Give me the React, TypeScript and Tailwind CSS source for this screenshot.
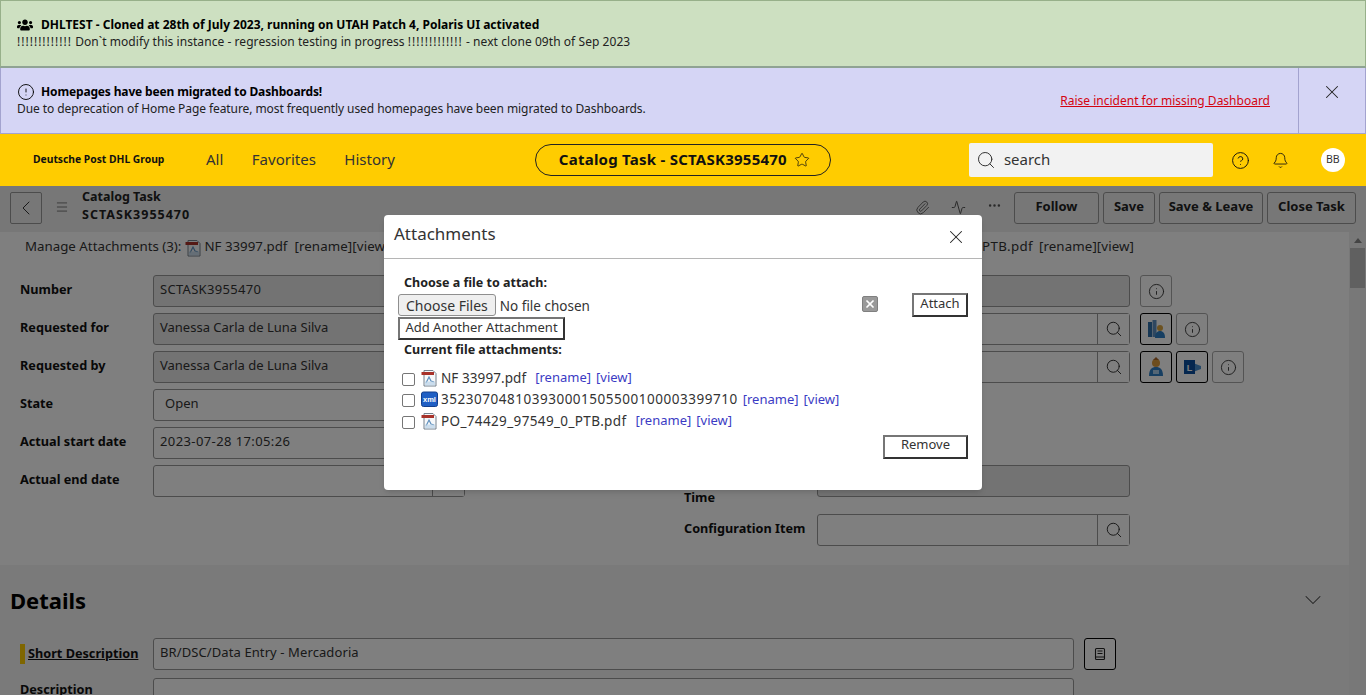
import type { ReactNode } from 'react';
import { Search, CircleHelp, Bell, Star, X, ChevronLeft, Menu, Paperclip, Activity, Ellipsis, Info, ChevronDown, CircleAlert } from 'lucide-react';
import { FaUsers } from 'react-icons/fa';

function PdfIcon() {
  return (
    <svg width="17" height="18" viewBox="0 0 17 18" className="shrink-0">
      <path d="M3 1.5h9l3 3v12.5H3z" fill="#f6f8fa" stroke="#75808c" />
      <rect x="0.5" y="3" width="12.5" height="3" fill="#a8322a" />
      <path d="M5 14l3-6 2 4 3 1" fill="none" stroke="#5f8fbd" strokeWidth="1.2" />
      <rect x="4" y="12.5" width="10" height="4" fill="#bcd4e8" opacity="0.75" />
    </svg>
  );
}

function XmlIcon() {
  return (
    <svg width="17" height="17" viewBox="0 0 17 17" className="shrink-0">
      <rect x="0.5" y="1" width="16" height="14.5" rx="2" fill="#1f5fc4" stroke="#123f8c" />
      <text x="8.5" y="11" textAnchor="middle" fontSize="7.5" fontWeight="700" fill="#fff" fontFamily="Liberation Sans, sans-serif">xml</text>
    </svg>
  );
}

function UsersAppIcon() {
  return (
    <svg width="20" height="22" viewBox="0 0 20 22">
      <rect x="2" y="4" width="4" height="15" fill="#2f6ea8" />
      <rect x="6.5" y="2" width="4" height="17" fill="#5c8fc0" />
      <circle cx="14" cy="10" r="3" fill="#d9a441" />
      <path d="M9 20c0-5 2-7 5-7s5 2 5 7z" fill="#2f7fc4" />
    </svg>
  );
}

function PersonAppIcon() {
  return (
    <svg width="20" height="22" viewBox="0 0 20 22">
      <circle cx="10" cy="7" r="4" fill="#d99a3c" />
      <path d="M7 4l3-3 3 3z" fill="#a8672a" />
      <path d="M3 20c0-7 3-9 7-9s7 2 7 9z" fill="#2f7fc4" />
      <rect x="7" y="14" width="6" height="4" fill="#a9cdea" />
    </svg>
  );
}

function OutlookIcon() {
  return (
    <svg width="20" height="20" viewBox="0 0 20 20">
      <path d="M11 6l8 3v3l-8 3z" fill="#4a90d0" />
      <rect x="2" y="3" width="11" height="14" fill="#0a4f9e" />
      <text x="7.5" y="14" textAnchor="middle" fontSize="9" fontWeight="700" fill="#fff" fontFamily="Liberation Sans, sans-serif">L</text>
    </svg>
  );
}

function SquareBtn({ children, dark }: { children: ReactNode; dark?: boolean }) {
  return (
    <div className={`w-8 h-8 shrink-0 rounded-[3px] border flex items-center justify-center bg-white ${dark ? 'border-black' : 'border-[#a8a8a8]'}`}>
      {children}
    </div>
  );
}

const infoBtn = (
  <SquareBtn>
    <Info className="w-[17px] h-[17px] text-[#333]" strokeWidth={1.3} />
  </SquareBtn>
);

function Field({ value = '', readOnly, lookup, width, text = '' }: { value?: string; readOnly?: boolean; lookup?: boolean; width: string; text?: string }) {
  return (
    <div className={`${width} h-8 shrink-0 rounded-[3px] border border-[#999] flex items-stretch ${readOnly ? 'bg-[#e6e6e6]' : 'bg-white'}`}>
      <span className={`flex-1 px-[6px] pt-[4px] text-[13px] text-[#333] truncate ${text}`}>{value}</span>
      {lookup && (
        <span className="w-8 border-l border-[#999] bg-white flex items-center justify-center">
          <Search className="w-[18px] h-[18px] text-[#222]" strokeWidth={1.2} />
        </span>
      )}
    </div>
  );
}

function LeftRow({ label, children }: { label: string; children: ReactNode }) {
  return (
    <div className="flex h-[38px]">
      <div className="w-[133px] shrink-0 pt-[5px] text-[12.7px] font-bold text-[#111]">{label}</div>
      {children}
    </div>
  );
}

function ActionBtn({ label, width }: { label: string; width: string }) {
  return (
    <div className={`${width} h-8 rounded-[3px] border border-[#999] bg-[#eeeeee] flex items-center justify-center pb-[3px] text-[13px] font-bold text-[#222]`}>
      {label}
    </div>
  );
}

function Outset({ label, className }: { label: string; className: string }) {
  return (
    <button className={`border-2 border-[#767676] border-r-[#333] border-b-[#333] bg-white text-[13px] leading-none text-[#333] ${className}`}>
      {label}
    </button>
  );
}

function FileRow({ icon, name, gap, tracking }: { icon: ReactNode; name: string; gap: string; tracking: string }) {
  return (
    <div className="flex items-center h-[21.5px] pl-[5px]">
      <input type="checkbox" className="w-[13px] h-[13px] mr-[6px] mt-[3px] shrink-0 appearance-none rounded-[2px] border border-[#767676] bg-white" />
      {icon}
      <span className={`ml-[3px] text-[13.5px] text-[#333] ${tracking}`}>{name}</span>
      <span className={`${gap} text-[13px] text-[#3b3bc4]`}>[rename]</span>
      <span className="ml-[5px] text-[13px] text-[#3b3bc4]">[view]</span>
    </div>
  );
}

function Modal() {
  return (
    <div className="w-[598px] h-[275px] bg-white rounded-[4px] shadow-md flex flex-col">
      <div className="h-[44px] shrink-0 border-b border-[#b5b5b5] flex items-center justify-between pl-[10px] pr-[15px] pb-[6px]">
        <span className="text-[17px] text-[#333]">Attachments</span>
        <X className="w-[22px] h-[22px] mt-[6px] text-[#222]" strokeWidth={1.1} />
      </div>
      <div className="px-[14px] pt-[15px] flex-1">
        <div className="pl-[6px] text-[12.5px] font-bold text-[#222] leading-[17px]">Choose a file to attach:</div>
        <div className="flex items-start h-[26px] mt-[1px]">
          <input
            type="file"
            multiple
            className="w-[464px] h-[22px] mt-[2px] shrink-0 text-[13.5px] text-[#333] file:h-[22px] file:px-[7px] file:mr-[4px] file:bg-[#efefef] file:border file:border-[#8f8f8f] file:rounded-[3px] file:text-[14px]"
          />
          <span className="w-4 h-4 mt-[4px] bg-[#9a9a9a] rounded-[2px] border border-[#808080] flex items-center justify-center">
            <X className="w-3 h-3 text-white" strokeWidth={3.5} />
          </span>
          <Outset label="Attach" className="w-[56px] h-[24px] ml-[34px] mt-[1px] pb-[4px]" />
        </div>
        <Outset label="Add Another Attachment" className="block w-[167px] h-[23px] -mt-[1px] pb-[2px]" />
        <div className="pl-[6px] mt-[1px] text-[12.5px] font-bold text-[#222] leading-[17px]">Current file attachments:</div>
        <div className="mt-[9px] -ml-[1px]">
          <FileRow icon={<PdfIcon />} name="NF 33997.pdf" gap="ml-[9px]" tracking="tracking-[0.08px]" />
          <FileRow icon={<XmlIcon />} name="352307048103930001505500100003399710" gap="ml-[5px]" tracking="tracking-[0.52px]" />
          <FileRow icon={<PdfIcon />} name="PO_74429_97549_0_PTB.pdf" gap="ml-[9px]" tracking="tracking-[0.36px]" />
        </div>
        <div className="flex justify-end mt-[3px]">
          <Outset label="Remove" className="w-[85px] h-[24px] pb-[5px]" />
        </div>
      </div>
    </div>
  );
}

export default function App() {
  return (
    <div className="relative w-[1366px] h-[695px] overflow-hidden flex flex-col bg-white font-['Noto_Sans',sans-serif] text-[#111]">
      {/* banners */}
      <div className="h-[68px] shrink-0 bg-[#cde0c1] border border-[#97b08a] border-b-2 border-b-[#8fa393] pl-4 pt-[15px] text-[12px] leading-[17px]">
        <div className="flex items-center gap-[8px] font-bold text-black">
          <FaUsers className="w-4 h-4" />
          <span>DHLTEST - Cloned at 28th of July 2023, running on UTAH Patch 4, Polaris UI activated</span>
        </div>
        <div className="text-[#222] tracking-[0.06px]">
          <span className="tracking-[1px]">!!!!!!!!!!!!!</span> Don`t modify this instance - regression testing in progress{' '}
          <span className="tracking-[1px]">!!!!!!!!!!!!!</span> - next clone 09th of Sep 2023
        </div>
      </div>
      <div className="h-[66px] shrink-0 bg-[#d5d5f5] border-x border-b border-[#a3a3cf] flex">
        <div className="flex-1 pl-4 pt-[15px] text-[12px] leading-[17px]">
          <div className="flex items-center h-[17px] gap-[6px] font-bold text-black">
            <CircleAlert className="w-[18px] h-[18px]" strokeWidth={1.2} />
            <span className="tracking-[-0.15px]">Homepages have been migrated to Dashboards!</span>
          </div>
          <div className="text-[#222] tracking-[-0.08px]">Due to deprecation of Home Page feature, most frequently used homepages have been migrated to Dashboards.</div>
        </div>
        <div className="pt-[24px] pr-[28px] text-[12px] text-[#d40511] underline leading-[17px]">Raise incident for missing Dashboard</div>
        <div className="w-[67px] border-l border-[#a3a3cf] pt-[13px] pl-[22px]">
          <X className="w-[22px] h-[22px] text-[#222]" strokeWidth={1.1} />
        </div>
      </div>

      {/* top nav */}
      <div className="h-[52px] shrink-0 bg-[#ffcc00] flex items-center">
        <div className="w-[206px] pl-[33px] text-[10.3px] font-bold text-[#111] whitespace-nowrap">Deutsche Post DHL Group</div>
        <div className="flex gap-[28.5px] pb-[2px] text-[15px] text-[#333]">
          <span>All</span>
          <span>Favorites</span>
          <span>History</span>
        </div>
        <div className="ml-[140px] w-[296px] h-8 rounded-full border border-[#222] flex items-center justify-center gap-[7px] pl-[3px] pb-[1px] text-[15px] font-bold text-[#111]">
          <span className="tracking-[0.24px]">Catalog Task - SCTASK3955470</span>
          <Star className="w-4 h-4" strokeWidth={1.1} />
        </div>
        <div className="ml-[138px] w-[244px] h-[34px] bg-[#f2f2f2] rounded-[2px] flex items-center pl-[7px] gap-[8px] text-[15px] text-[#333]">
          <Search className="w-5 h-5" strokeWidth={1.2} />
          <span className="pb-[2px]">search</span>
        </div>
        <CircleHelp className="ml-[18px] w-[19px] h-[19px]" strokeWidth={1.2} />
        <Bell className="ml-[22px] w-[17px] h-[17px]" strokeWidth={1.2} />
        <div className="ml-[32px] w-6 h-6 rounded-full bg-white flex items-center justify-center text-[10.5px] text-[#333]">BB</div>
      </div>

      {/* dimmed record page */}
      <div className="relative flex-1 min-h-0 flex flex-col">
        <div className="h-[46px] shrink-0 bg-[#eeeeee] flex items-start pt-[6px] pl-[10px] pr-[10px]">
          <div className="w-8 h-8 rounded-[2px] border border-[#999] flex items-center justify-center">
            <ChevronLeft className="w-6 h-6 text-[#333]" strokeWidth={1} />
          </div>
          <Menu className="ml-[13px] mt-[8px] w-[14px] h-[14px] text-[#555]" strokeWidth={1.3} />
          <div className="ml-[13px] -mt-[4px] text-[12.5px] font-bold leading-[18px] text-[#222]">
            <div>Catalog Task</div>
            <div className="tracking-[1px]">SCTASK3955470</div>
          </div>
          <div className="flex-1" />
          <Paperclip className="mt-[8px] w-[15px] h-[15px] text-[#555]" strokeWidth={1.4} />
          <Activity className="ml-[21px] mt-[8px] w-[15px] h-[15px] text-[#555]" strokeWidth={1.6} />
          <Ellipsis className="ml-[21px] mt-[6px] w-[15px] h-[15px] text-[#555]" strokeWidth={2} />
          <div className="ml-[12px] flex gap-1">
            <ActionBtn label="Follow" width="w-[85px]" />
            <ActionBtn label="Save" width="w-[52px]" />
            <ActionBtn label="Save & Leave" width="w-[104px]" />
            <ActionBtn label="Close Task" width="w-[89px]" />
          </div>
        </div>

        <div className="flex-1 min-h-0 flex">
          <div className="flex-1 min-w-0 flex flex-col overflow-hidden">
            <div className="h-[43px] shrink-0 pl-[25px] pt-[5px] flex items-start text-[13.3px] text-[#333] whitespace-nowrap">
              <span>Manage Attachments (3):</span>
              <span className="ml-[4px] pt-[2px]"><PdfIcon /></span>
              <span className="ml-[2px]">NF 33997.pdf</span>
              <span className="ml-[7px] tracking-[0.1px]">[rename][view]</span>
              <span className="ml-[17px] pt-[2px]"><XmlIcon /></span>
              <span className="ml-[2px] tracking-[0.52px]">352307048103930001505500100003399710</span>
              <span className="ml-[8px] tracking-[0.1px]">[rename][view]</span>
              <span className="ml-[10px] pt-[2px]"><PdfIcon /></span>
              <span className="ml-[2px] tracking-[0.36px]">PO_74429_97549_0_PTB.pdf</span>
              <span className="ml-[6px] tracking-[0.1px]">[rename][view]</span>
            </div>

            <div className="flex h-[290px] shrink-0 pl-5">
              <div className="w-[664px] shrink-0">
                <LeftRow label="Number"><Field width="w-[312px]" value="SCTASK3955470" readOnly text="tracking-[0.3px]" /></LeftRow>
                <LeftRow label="Requested for"><Field width="w-[312px]" value="Vanessa Carla de Luna Silva" readOnly /></LeftRow>
                <LeftRow label="Requested by"><Field width="w-[312px]" value="Vanessa Carla de Luna Silva" readOnly /></LeftRow>
                <LeftRow label="State"><Field width="w-[312px]" value="Open" text="pl-[11px]" /></LeftRow>
                <LeftRow label="Actual start date"><Field width="w-[312px]" value="2023-07-28 17:05:26" lookup text="tracking-[0.4px]" /></LeftRow>
                <LeftRow label="Actual end date"><Field width="w-[312px]" lookup /></LeftRow>
              </div>
              <div className="flex-1">
                <div className="flex gap-[10px] h-[38px] pl-[133px]">
                  <Field width="w-[313px]" readOnly />
                  {infoBtn}
                </div>
                <div className="flex gap-[10px] h-[38px] pl-[133px]">
                  <Field width="w-[313px]" lookup />
                  <div className="flex gap-1">
                    <SquareBtn dark><UsersAppIcon /></SquareBtn>
                    {infoBtn}
                  </div>
                </div>
                <div className="flex gap-[10px] h-[38px] pl-[133px]">
                  <Field width="w-[313px]" lookup />
                  <div className="flex gap-1">
                    <SquareBtn dark><PersonAppIcon /></SquareBtn>
                    <SquareBtn dark><OutlookIcon /></SquareBtn>
                    {infoBtn}
                  </div>
                </div>
                <div className="h-[76px]" />
                <div className="flex h-[49px]">
                  <div className="w-[133px] shrink-0 pt-[5px] text-[12.7px] font-bold leading-[18px]">
                    Actual Elapsed
                    <br />
                    Time
                  </div>
                  <Field width="w-[313px]" readOnly />
                </div>
                <div className="flex h-[32px]">
                  <div className="w-[133px] shrink-0 pt-[5px] text-[12.7px] font-bold">Configuration Item</div>
                  <Field width="w-[313px]" lookup />
                </div>
              </div>
            </div>

            <div className="flex-1 bg-[#f5f5f5] relative">
              <div className="flex items-center justify-between h-[73px] pl-[10px] pr-[22px] pb-[3px]">
                <span className="text-[22px] font-bold text-black">Details</span>
                <ChevronDown className="w-7 h-7 text-[#444]" strokeWidth={0.9} />
              </div>
              <div className="flex h-[40px] pl-5">
                <div className="w-[133px] shrink-0 flex items-start pt-[6px]">
                  <span className="w-[5px] h-5 bg-[#ffcc00] mr-[3px]" />
                  <span className="text-[12.7px] font-bold underline">Short Description</span>
                </div>
                <Field width="w-[921px]" value="BR/DSC/Data Entry - Mercadoria" text="tracking-[0.1px]" />
                <div className="ml-[10px]">
                  <SquareBtn dark>
                    <svg width="14" height="14" viewBox="0 0 14 14" fill="none" stroke="#222" strokeWidth="1.1">
                      <rect x="2.5" y="1.5" width="9" height="11" rx="1" />
                      <path d="M4.5 4h5M4.5 6.5h5M2.5 10h9" />
                    </svg>
                  </SquareBtn>
                </div>
              </div>
              <div className="flex pl-5">
                <div className="w-[133px] shrink-0 pt-[3px] text-[12.7px] font-bold leading-[17px]">Description</div>
                <Field width="w-[921px]" />
              </div>
            </div>
          </div>

          <div className="w-[17px] shrink-0 bg-[#f1f1f1] flex flex-col items-center">
            <div className="h-4 flex items-center">
              <span className="w-0 h-0 border-x-4 border-x-transparent border-b-[5px] border-b-[#888]" />
            </div>
            <div className="w-[15px] h-10 bg-[#c1c1c1]" />
          </div>
        </div>

        <div className="absolute inset-0 bg-black/50 flex justify-center items-start pt-[29px]">
          <Modal />
        </div>
      </div>
    </div>
  );
}
